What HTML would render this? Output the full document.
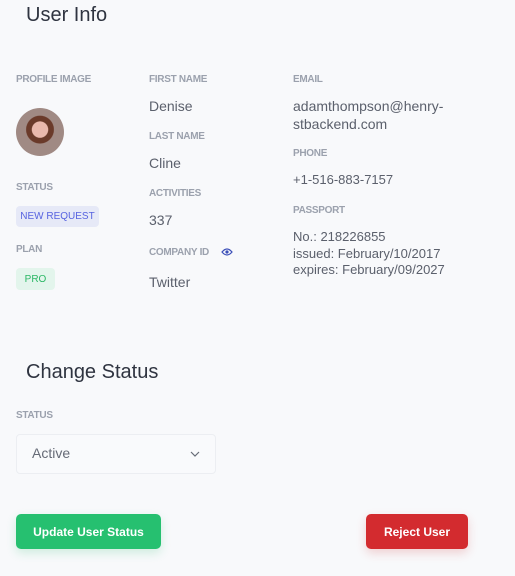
<!DOCTYPE html>
<html><head><style>
*{margin:0;padding:0;box-sizing:border-box}
body{width:515px;height:576px;background:#f8f9fb;font-family:"Liberation Sans",sans-serif;position:relative;overflow:hidden;color:#5b606c}
.a{position:absolute;white-space:nowrap;line-height:1}
.t{font-size:20px;color:#2f3440}
.l{font-size:10px;font-weight:bold;color:#9ba1ad;letter-spacing:-0.3px}
.v{font-size:14px;color:#5b606c}
.badge{position:absolute;border-radius:4px;font-size:10px;display:flex;align-items:center;justify-content:center}
.btn{position:absolute;border-radius:5px;color:#fff;font-size:12px;font-weight:bold;display:flex;align-items:center;justify-content:center}
</style></head><body>
<div class="a t" style="left:26px;top:5px">User Info</div>

<div class="a l" style="left:16px;top:75px">PROFILE IMAGE</div>
<div style="position:absolute;left:16px;top:108px;width:48px;height:48px;border-radius:50%;background:radial-gradient(circle at 50% 45%,#e9b8ac 0 22%,#6a3a2a 24% 38%,#a08a84 40%);"></div>
<div class="a l" style="left:16px;top:183px">STATUS</div>
<div class="badge" style="left:16px;top:206px;width:83px;height:21px;background:#e6e9f7;color:#5763e0">NEW REQUEST</div>
<div class="a l" style="left:16px;top:245px">PLAN</div>
<div class="badge" style="left:16px;top:268px;width:39px;height:22px;background:#e3f5ec;color:#2bb765">PRO</div>

<div class="a l" style="left:149px;top:75px">FIRST NAME</div>
<div class="a v" style="left:149px;top:99px">Denise</div>
<div class="a l" style="left:149px;top:132px">LAST NAME</div>
<div class="a v" style="left:149px;top:156px">Cline</div>
<div class="a l" style="left:149px;top:189px">ACTIVITIES</div>
<div class="a v" style="left:149px;top:213px">337</div>
<div class="a l" style="left:149px;top:248px">COMPANY ID</div>
<svg style="position:absolute;left:221px;top:247px" width="12" height="10" viewBox="0 0 12 10"><path d="M1 5Q6 -1 11 5Q6 11 1 5Z" fill="none" stroke="#3b4fb8" stroke-width="1.2"/><circle cx="6" cy="5" r="1.6" fill="#3b4fb8"/></svg>
<div class="a v" style="left:149px;top:275px">Twitter</div>

<div class="a l" style="left:293px;top:75px">EMAIL</div>
<div class="a v" style="left:293px;top:97px;line-height:18px">adamthompson@henry-<br>stbackend.com</div>
<div class="a l" style="left:293px;top:149px">PHONE</div>
<div class="a v" style="left:293px;top:173px;font-size:13px">+1-516-883-7157</div>
<div class="a l" style="left:293px;top:206px">PASSPORT</div>
<div class="a v" style="left:293px;top:229px;font-size:13px;line-height:16.5px">No.: 218226855<br>issued: February/10/2017<br>expires: February/09/2027</div>

<div class="a t" style="left:26px;top:362px">Change Status</div>
<div class="a l" style="left:16px;top:411px">STATUS</div>
<div style="position:absolute;left:16px;top:434px;width:200px;height:40px;border:1px solid #eceef2;border-radius:4px;background:#f9fafc"></div>
<div class="a v" style="left:32px;top:446px;color:#666b77">Active</div>
<svg style="position:absolute;left:190px;top:451px" width="10" height="6" viewBox="0 0 10 6"><path d="M1 1L5 5L9 1" fill="none" stroke="#666b77" stroke-width="1.2"/></svg>

<div class="btn" style="left:16px;top:514px;width:145px;height:35px;background:#26c070;box-shadow:0 4px 10px rgba(38,192,112,.2)">Update User Status</div>
<div class="btn" style="left:366px;top:514px;width:102px;height:35px;background:#d32b2f;box-shadow:0 4px 10px rgba(211,43,47,.2)">Reject User</div>
</body></html>
